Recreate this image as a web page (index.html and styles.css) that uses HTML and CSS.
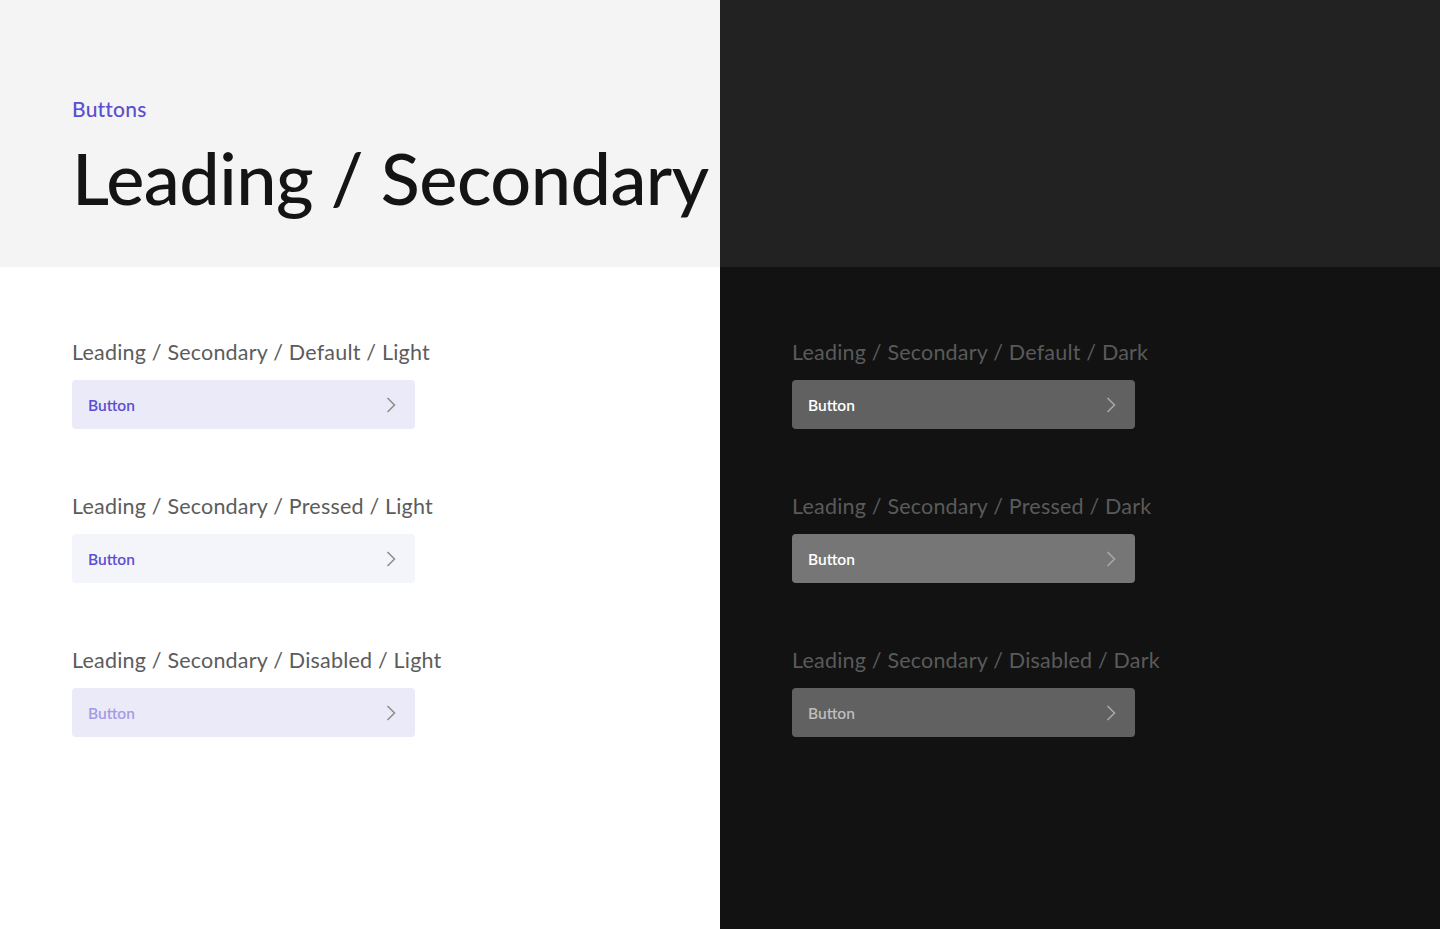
FILE: index.html
```html
<!DOCTYPE html>
<html>
<head>
<meta charset="utf-8">
<link rel="stylesheet" href="styles.css">
</head>
<body>
<div class="page">
  <section class="half light">
    <header class="hero">
      <div class="eyebrow">Buttons</div>
      <h1 class="title">Leading / Secondary</h1>
    </header>
    <div class="list">
      <div class="item">
        <div class="label">Leading / Secondary / Default / Light</div>
        <button class="btn btn-light-default"><span>Button</span><svg class="chev" viewBox="0 0 10 16" width="10" height="16"><path d="M1.5 1 L8.5 8 L1.5 15" fill="none" stroke="currentColor" stroke-width="1.6"/></svg></button>
      </div>
      <div class="item">
        <div class="label">Leading / Secondary / Pressed / Light</div>
        <button class="btn btn-light-pressed"><span>Button</span><svg class="chev" viewBox="0 0 10 16" width="10" height="16"><path d="M1.5 1 L8.5 8 L1.5 15" fill="none" stroke="currentColor" stroke-width="1.6"/></svg></button>
      </div>
      <div class="item">
        <div class="label">Leading / Secondary / Disabled / Light</div>
        <button class="btn btn-light-disabled"><span>Button</span><svg class="chev" viewBox="0 0 10 16" width="10" height="16"><path d="M1.5 1 L8.5 8 L1.5 15" fill="none" stroke="currentColor" stroke-width="1.6"/></svg></button>
      </div>
    </div>
  </section>
  <section class="half dark">
    <header class="hero"></header>
    <div class="list">
      <div class="item">
        <div class="label">Leading / Secondary / Default / Dark</div>
        <button class="btn btn-dark-default"><span>Button</span><svg class="chev" viewBox="0 0 10 16" width="10" height="16"><path d="M1.5 1 L8.5 8 L1.5 15" fill="none" stroke="currentColor" stroke-width="1.6"/></svg></button>
      </div>
      <div class="item">
        <div class="label">Leading / Secondary / Pressed / Dark</div>
        <button class="btn btn-dark-pressed"><span>Button</span><svg class="chev" viewBox="0 0 10 16" width="10" height="16"><path d="M1.5 1 L8.5 8 L1.5 15" fill="none" stroke="currentColor" stroke-width="1.6"/></svg></button>
      </div>
      <div class="item">
        <div class="label">Leading / Secondary / Disabled / Dark</div>
        <button class="btn btn-dark-disabled"><span>Button</span><svg class="chev" viewBox="0 0 10 16" width="10" height="16"><path d="M1.5 1 L8.5 8 L1.5 15" fill="none" stroke="currentColor" stroke-width="1.6"/></svg></button>
      </div>
    </div>
  </section>
</div>
</body>
</html>
```
FILE: styles.css
```css
* { box-sizing: border-box; }
html, body { margin: 0; padding: 0; }
body {
  font-family: "Lato", "Noto Sans", sans-serif;
  width: 1440px;
  height: 929px;
  overflow: hidden;
}
.page {
  display: grid;
  grid-template-columns: 720px 720px;
  height: 929px;
}
.half {
  display: flex;
  flex-direction: column;
}
.light { background: #ffffff; }
.dark { background: #121212; }
.hero {
  height: 267px;
  padding: 95px 0 0 72px;
}
.light .hero { background: #f4f4f4; }
.dark .hero { background: #222222; }
.eyebrow {
  color: #5a4fd0;
  font-size: 21px;
  line-height: 28px;
  font-weight: 500;
  letter-spacing: 0.2px;
}
.title {
  margin: 12px 0 0 0;
  font-size: 72px;
  line-height: 84px;
  font-weight: 500;
  color: #141414;
  letter-spacing: -0.5px;
  white-space: nowrap;
}
.list {
  display: flex;
  flex-direction: column;
  gap: 64px;
  padding: 72px 0 0 72px;
}
.item {
  display: flex;
  flex-direction: column;
  gap: 15px;
}
.label {
  font-size: 21.5px;
  line-height: 26px;
  letter-spacing: 0.2px;
  white-space: nowrap;
}
.light .label { color: #5c5c5c; }
.dark .label { color: #5a5a5a; }
.btn {
  width: 343px;
  height: 49px;
  border: 0;
  border-radius: 4px;
  padding: 0 19px 0 16px;
  display: flex;
  align-items: center;
  justify-content: space-between;
  font-family: inherit;
  font-size: 15.5px;
  font-weight: 600;
  cursor: pointer;
}
.chev { display: block; }
.btn-light-default { background: #ebeaf8; color: #5a4fd0; }
.btn-light-pressed { background: #f4f4fb; color: #5a4fd0; }
.btn-light-disabled { background: #ebeaf8; color: #a39ce4; }
.btn-light-default .chev,
.btn-light-pressed .chev,
.btn-light-disabled .chev { color: #8f8f8f; }
.btn-dark-default { background: #616161; color: #ffffff; }
.btn-dark-pressed { background: #767676; color: #ffffff; }
.btn-dark-disabled { background: #616161; color: #bdbdbd; }
.btn-dark-default .chev,
.btn-dark-pressed .chev,
.btn-dark-disabled .chev { color: #a8a8a8; }
```
